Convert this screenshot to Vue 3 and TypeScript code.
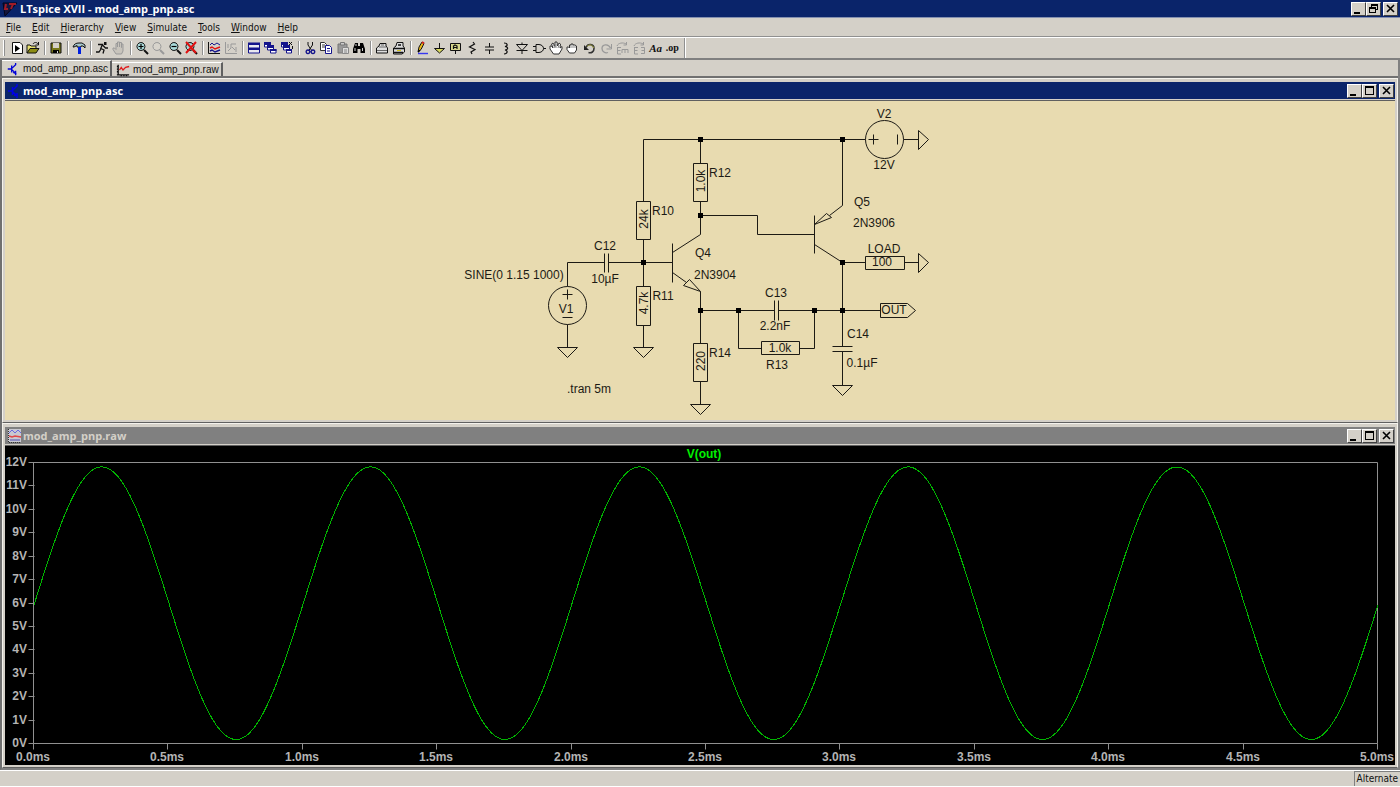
<script setup lang="ts">
interface Shape {
  d: string
  stroke?: string
  fill?: string
  width?: number
}
interface Tool {
  name: string
  shapes?: Shape[]
  text?: string
  small?: boolean
  disabled?: boolean
}
interface Label {
  x: number
  y: number
  text: string
  rotated?: boolean
}

const menus = ['File', 'Edit', 'Hierarchy', 'View', 'Simulate', 'Tools', 'Window', 'Help']

const K = '#111'
const G = '#999'
const N = '#14148c'

const handShape =
  'M5 14L2 9.5V8H3.500L5 9.500V3.500H6.500V7V2H8.500V7V2.500H10.500V7.500V4H12V11L10.500 14Z'

const toolGroups: { id: string; tools: Tool[] }[] = [
  {
    id: 'file',
    tools: [
      { name: 'New schematic', shapes: [{ d: 'M3.500 2.500H11L13.500 5V13.500H3.500Z', stroke: K, fill: '#fff' }, { d: 'M6 5L11 8.500L6 12Z', fill: '#000' }] },
      { name: 'Open', shapes: [{ d: 'M2 13V5H5L6 6H11V8', stroke: K, fill: '#e8e070' }, { d: 'M2 13L5 8.500H14L11 13Z', stroke: K, fill: '#8c8c14' }, { d: 'M8 4C9 2 12 2 13 4M13.500 2V5H10.500', stroke: K }] },
    ],
  },
  {
    id: 'save',
    tools: [
      { name: 'Save', shapes: [{ d: 'M3 3H13V13H3Z', stroke: K, fill: '#77771a' }, { d: 'M5 3H11V8H5Z', fill: '#d4d0c8' }, { d: 'M5 10H11V13H5Z', fill: '#000' }, { d: 'M9 11H10V13H9Z', fill: '#ddd' }] },
    ],
  },
  {
    id: 'panel',
    tools: [
      { name: 'Control panel', shapes: [{ d: 'M2 7C3 4 5 3 8 3H11L14 5V8L12 6H10V7H6V5.500L3 7Z', stroke: K, fill: '#a8c8cc' }, { d: 'M7 7H10V14H7Z', fill: '#0020e0' }] },
    ],
  },
  {
    id: 'run',
    tools: [
      { name: 'Run', shapes: [{ d: 'M10 2H12.500V5H10Z', fill: K }, { d: 'M4 4.500H8.500L6.500 9M8.500 5L11.500 8H14M7 8.500L10 10L9 13.500M7 9L5 12H2', stroke: K, width: 1.3 }] },
      { name: 'Halt', disabled: true, shapes: [{ d: handShape, stroke: G, fill: '#c8c4bc' }] },
    ],
  },
  {
    id: 'zoom',
    tools: [
      { name: 'Zoom in', shapes: [{ d: 'M10 10L14 14', stroke: K, width: 2 }, { d: 'M7 2.500A4 4 0 1 1 6.900 2.500Z', stroke: K, fill: '#a8d8d8' }, { d: 'M4.500 6.500H9.500M7 4V9', stroke: '#000', width: 1.2 }] },
      { name: 'Pan', disabled: true, shapes: [{ d: 'M10 10L14 14', stroke: G, width: 2 }, { d: 'M7 2.500A4 4 0 1 1 6.900 2.500Z', stroke: G, fill: '#d8d4cc' }] },
      { name: 'Zoom out', shapes: [{ d: 'M10 10L14 14', stroke: K, width: 2 }, { d: 'M7 2.500A4 4 0 1 1 6.900 2.500Z', stroke: K, fill: '#a8d8d8' }, { d: 'M4.500 6.500H9.500', stroke: '#000', width: 1.2 }] },
      { name: 'Zoom full extents', shapes: [{ d: 'M10 10L14 14', stroke: K, width: 2 }, { d: 'M7 2.500A4 4 0 1 1 6.900 2.500Z', stroke: K, fill: '#a8d8d8' }, { d: 'M3 2L13 13M13 2L3 13', stroke: '#e01010', width: 2 }] },
    ],
  },
  {
    id: 'plot',
    tools: [
      { name: 'Autorange', shapes: [{ d: 'M2.500 2V13.500H14', stroke: K }, { d: 'M4 5L6 3L8 5L11 3L14 5', stroke: N }, { d: 'M4 8L6 7L9 9L14 7', stroke: '#e01010', width: 1.5 }, { d: 'M4 11L6 10L9 12L14 10', stroke: N, width: 1.4 }] },
      { name: 'Plot settings', disabled: true, shapes: [{ d: 'M2.500 2V13.500H14', stroke: G }, { d: 'M5 11L8 8V4H13M9 7L12 10M13 7V12M5 4V8', stroke: G }] },
    ],
  },
  {
    id: 'windows',
    tools: [
      { name: 'Tile', shapes: [{ d: 'M2.500 3.500H13.500V8H2.500ZM2.500 8.500H13.500V13H2.500Z', stroke: N, fill: '#e8e8f0' }, { d: 'M2 2.500H14V5H2ZM2 8H14V10H2Z', fill: N }] },
      { name: 'Cascade', shapes: [{ d: 'M2.500 3.500H8.500V7H2.500Z', stroke: N, fill: '#fff' }, { d: 'M2 2H9V5H2Z', fill: N }, { d: 'M5.500 6.500H11.500V10H5.500Z', stroke: N, fill: '#fff' }, { d: 'M5 5H12V8H5Z', fill: N }, { d: 'M8.500 9.500H14V13H8.500Z', stroke: N, fill: '#fff' }, { d: 'M8 9H14.500V11H8Z', fill: N }] },
      { name: 'Close all', shapes: [{ d: 'M2.500 3.500H8.500V7H2.500Z', stroke: N, fill: '#fff' }, { d: 'M2 2H9V5H2Z', fill: N }, { d: 'M4.500 6.500H10.500V10H4.500Z', stroke: N, fill: '#fff' }, { d: 'M4 5H11V8H4Z', fill: N }, { d: 'M7.500 9.500H12.500V13H7.500Z', stroke: N, fill: '#fff' }, { d: 'M7 9H13V11H7Z', fill: N }, { d: 'M10 2L13 5M13 2L10 5M13.500 6V9', stroke: K }] },
    ],
  },
  {
    id: 'edit',
    tools: [
      { name: 'Cut', shapes: [{ d: 'M6 2V5L10 11M10.500 2V5L6.500 11', stroke: K }, { d: 'M6 10A1.800 1.800 0 1 1 5.900 10ZM11 10A1.800 1.800 0 1 1 10.900 10Z', stroke: N, width: 1.4 }] },
      { name: 'Copy', shapes: [{ d: 'M2.500 2.500H6.500L8.500 4.500V10.500H2.500Z', stroke: '#333', fill: '#fff' }, { d: 'M4 5H7M4 7H7', stroke: '#333' }, { d: 'M7.500 5.500H11.500L13.500 7.500V13.500H7.500Z', stroke: N, fill: '#fff' }, { d: 'M9 8.500H12M9 11H12', stroke: N }] },
      { name: 'Paste', disabled: true, shapes: [{ d: 'M3 4H12V13H3Z', stroke: '#777', fill: G }, { d: 'M5.500 2.500H9.500V5H5.500Z', stroke: '#777', fill: '#ccc' }, { d: 'M7.500 7.500H13.500V13.500H7.500Z', stroke: '#888', fill: '#ddd' }, { d: 'M9 10H12M9 12H12', stroke: '#888' }] },
      { name: 'Find', shapes: [{ d: 'M4 3H7V6H9V3H12L14 9V13H9.500V9H6.500V13H2V9Z', fill: '#000' }, { d: 'M4 8V11M11.500 8V11M5 4V6', stroke: '#ccc' }] },
    ],
  },
  {
    id: 'print',
    tools: [
      { name: 'Print setup', shapes: [{ d: 'M2.500 8L5 6L6 3.500H12L12 6L13.500 8V13H2.500Z', stroke: K, fill: '#ddd' }, { d: 'M5 7H12M3 10.500H13M7 5H10', stroke: '#666' }] },
      { name: 'Print', shapes: [{ d: 'M2.500 8L5 6L6 2.500H12L12 6L13.500 8V12L11 14H2.500Z', stroke: K, fill: '#ddd' }, { d: 'M3 8.500H13M3 12.500H12M7 5H10', stroke: K, width: 1.4 }, { d: 'M6 10.500H10', stroke: '#d8c820' }] },
    ],
  },
  {
    id: 'draw',
    tools: [
      { name: 'Wire', shapes: [{ d: 'M4 12L5 7L8 2L10 3.500L7 9.500Z', fill: '#e8b818', stroke: K }, { d: 'M4 13L4.500 9.500L6.500 10.500Z', fill: '#000' }, { d: 'M8 2L10 3.500', stroke: '#d02020', width: 2 }, { d: 'M4 13.500H14', stroke: '#3838f0', width: 1.4 }] },
      { name: 'Ground', shapes: [{ d: 'M8.500 3V8', stroke: K }, { d: 'M3.500 8.500H13.500L8.500 13Z', stroke: K, fill: '#d8d860' }] },
      { name: 'Label net', shapes: [{ d: 'M3.500 3.500H13.500V10.500H3.500Z', stroke: K, fill: '#d8d88c' }, { d: 'M8.500 11V14', stroke: K }, { d: 'M6.500 9V6L8 5L10 6V9M7 7.500H10', stroke: K, width: 1.2 }] },
      { name: 'Resistor', shapes: [{ d: 'M9 2L10.500 4L5.500 7L11 9.500L7 12L8 14', stroke: K, width: 1.2 }] },
      { name: 'Capacitor', shapes: [{ d: 'M8.500 3V7M8.500 10V14', stroke: K }, { d: 'M4 7H13M4 10H13', stroke: K, width: 1.2 }] },
      { name: 'Inductor', shapes: [{ d: 'M7 3C11 3 11 6 8 6.500C11.500 7 11.500 9.500 8 10C11 10.500 11 13.500 7 14', stroke: K, width: 1.2 }] },
      { name: 'Diode', shapes: [{ d: 'M2.500 4.500H13.500L8 10.500ZM2.500 10.500H13.500M8 2.500V4.500M8 10.500V14', stroke: K }] },
      { name: 'Component', shapes: [{ d: 'M5 4.500H8C14 5 14 12 8 12.500H5ZM2 6.500H5M2 10.500H5M12.500 8.500H15', stroke: K }] },
      { name: 'Move', shapes: [{ d: 'M5.500 14L2 9V6H3.500L5 8L3.500 4L5 3L7 6.500L7 2H9L9.500 6L11 3L12.500 4L12 8L14 6.500V9L11 14Z', stroke: '#333', fill: '#fff' }, { d: 'M5 4L7 8M8 4V8M11 5L10 8', stroke: '#888' }] },
      { name: 'Drag', shapes: [{ d: 'M5.500 13L3 9.500V7H4.500L5.500 8V5H7V4H9V5H11L12.500 6V10L10.500 13Z', stroke: '#333', fill: '#fff' }, { d: 'M7 5V8M9 5V8M11 6V8', stroke: '#888' }] },
      { name: 'Undo', shapes: [{ d: 'M3 5V10H8Z', fill: '#222' }, { d: 'M5 7.500C7 3 13 4 13 8.500C13 11.500 10.500 13.500 7.500 12.500', stroke: '#333', width: 1.6 }, { d: 'M6 6.500C8 4 12 4.500 12.500 8', stroke: '#a0a040' }] },
      { name: 'Redo', disabled: true, shapes: [{ d: 'M13.500 4V9H8.500', stroke: G }, { d: 'M12.500 8C10 3 4 4.500 4 8.500C4 11.500 7 13.500 10 12.500', stroke: G, width: 1.3 }] },
      { name: 'Rotate', disabled: true, shapes: [{ d: 'M3 6C4 3 9 2 12 4M12.500 2V5H9.500M3.500 7V14H7M3.500 10.500H6.500M3.500 7.500H7M8 13V9.500H14V13M11 10V13', stroke: G }] },
      { name: 'Mirror', disabled: true, shapes: [{ d: 'M3 6C4 3 9 2 12 4M12.500 2V5H9.500M3.500 7V14H7M3.500 10.500H6.500M3.500 7.500H7M10 7.500H13.500V13.500H10M10.500 10.500H13', stroke: G }] },
      { name: 'Text', text: 'Aa' },
      { name: 'SPICE directive', text: '.op', small: true },
    ],
  },
]

const wires: string[] = [
  'M643 201V139H865M903 139H918M643 239V286M643 325V347M567 286V262H604M608 262H672',
  'M567 324V347M700 139V163M700 201V234L672 252M700 215H757V234H814M672 243V282M672 272L686 282',
  'M700 291V343M700 381V404M700 310H774M778 310H880M738 310V348H761M799 348H814V310',
  'M842 139V205L829 215M814 215V253M814 244L842 262V346M842 351V385M842 262H865M904 262H918',
  'M604 253V272M608 253V272M774 300V320M778 300V320M832 346H852M832 351H852',
  'M562 294H572M567 289V299M562 317H572M868 139H878M873 134V144M897 134V144',
]
const outlines: string[] = [
  'M636 201H650V239H636ZM636 286H650V325H636ZM693 163H707V201H693ZM693 343H707V381H693Z',
  'M761 341H799V354H761ZM865 256H904V269H865ZM880 303H907L915 310L907 317H880Z',
  'M557 347H577L567 357ZM633 347H653L643 357ZM690 404H710L700 414ZM832 385H852L842 395Z',
  'M918 130L928 139L918 149ZM918 253L928 262L918 272Z',
  'M700 291L689 279L683 285ZM814 224L826 213L831 217Z',
]
const nodes: [number, number][] = [
  [700, 139], [842, 139], [700, 215], [643, 262], [842, 262], [700, 310], [738, 310], [814, 310], [842, 310],
]
const labels: Label[] = [
  { x: 884, y: 118, text: 'V2' },
  { x: 884, y: 169, text: '12V' },
  { x: 862, y: 206, text: 'Q5' },
  { x: 874, y: 227, text: '2N3906' },
  { x: 884, y: 253, text: 'LOAD' },
  { x: 882, y: 266, text: '100' },
  { x: 720, y: 177, text: 'R12' },
  { x: 663, y: 215, text: 'R10' },
  { x: 663, y: 300, text: 'R11' },
  { x: 720, y: 357, text: 'R14' },
  { x: 703, y: 257, text: 'Q4' },
  { x: 715, y: 279, text: '2N3904' },
  { x: 605, y: 250, text: 'C12' },
  { x: 605, y: 283, text: '10µF' },
  { x: 514, y: 279, text: 'SINE(0 1.15 1000)' },
  { x: 566, y: 313, text: 'V1' },
  { x: 776, y: 297, text: 'C13' },
  { x: 775, y: 330, text: '2.2nF' },
  { x: 780, y: 352, text: '1.0k' },
  { x: 777, y: 369, text: 'R13' },
  { x: 858, y: 338, text: 'C14' },
  { x: 862, y: 367, text: '0.1µF' },
  { x: 894, y: 314, text: 'OUT' },
  { x: 589, y: 393, text: '.tran 5m' },
  { x: 648, y: 219, text: '24k', rotated: true },
  { x: 648, y: 303, text: '4.7k', rotated: true },
  { x: 705, y: 181, text: '1.0k', rotated: true },
  { x: 705, y: 361, text: '220', rotated: true },
]

const plot = { left: 34, right: 1378, top: 462, bottom: 743 }
const xOf = (ms: number): number => plot.left + ((plot.right - plot.left) * ms) / 5
const yOf = (v: number): number => plot.bottom - ((plot.bottom - plot.top) * v) / 12

const voltTicks = Array.from({ length: 13 }, (_, i) => ({ y: Math.round(yOf(i)), text: `${i}V` }))
const timeTicks = Array.from({ length: 11 }, (_, i) => ({
  x: Math.round(xOf(i / 2)),
  text: `${(i / 2).toFixed(1)}ms`,
}))

const trace = Array.from({ length: 673 }, (_, i) => {
  const ms = (i * 5) / 672
  const v = 5.97 + 5.82 * Math.sin(2 * Math.PI * (ms - 0.002))
  return `${xOf(ms).toFixed(1)},${yOf(v).toFixed(1)}`
}).join(' ')
</script>

<template>
  <div class="app">
    <header class="titlebar main-title">
      <svg class="app-icon" viewBox="0 0 16 16" aria-hidden="true">
        <path d="M1 2H15L3 15Z" fill="#16163c" stroke="#05051c" />
        <path d="M4 3L3 8H6M7 3H14M11 3L9 8" fill="none" stroke="#a01c28" stroke-width="2" />
      </svg>
      <h1>LTspice XVII - mod_amp_pnp.asc</h1>
      <div class="controls">
        <button type="button" aria-label="Minimize"><svg viewBox="0 0 13 12"><path d="M2 9H8V11H2Z" /></svg></button>
        <button type="button" aria-label="Restore">
          <svg viewBox="0 0 13 12"><path d="M4 1H11V7H9V6H10V3H5V4H4ZM2 4H9V10H2ZM3 6V9H8V6Z" fill-rule="evenodd" /></svg>
        </button>
        <button type="button" aria-label="Close" class="close"><svg viewBox="0 0 13 12"><path class="cross" d="M3 2L10 9M10 2L3 9" /></svg></button>
      </div>
    </header>

    <nav class="menubar">
      <button v-for="m in menus" :key="m" type="button"><u>{{ m[0] }}</u>{{ m.slice(1) }}</button>
    </nav>

    <div class="toolbar" role="toolbar" aria-label="Schematic tools">
      <div v-for="g in toolGroups" :key="g.id" class="group" :class="g.id">
        <button v-for="t in g.tools" :key="t.name" type="button" :aria-label="t.name" :disabled="t.disabled">
          <svg v-if="t.shapes" viewBox="0 0 16 16">
            <path
              v-for="(s, i) in t.shapes"
              :key="i"
              :d="s.d"
              :stroke="s.stroke ?? 'none'"
              :fill="s.fill ?? 'none'"
              :stroke-width="s.width ?? 1"
            />
          </svg>
          <span v-else :class="{ small: t.small }">{{ t.text }}</span>
        </button>
      </div>
    </div>

    <main class="workspace">
      <div class="tabs" role="tablist">
        <button type="button" role="tab" aria-selected="true" class="tab active">
          <svg viewBox="0 0 16 16"><path d="M2 8H6M6.500 4V12M7 7L11 3V1M7 9L11 13V15" /><path d="M8 12L11 13V10" /></svg>
          mod_amp_pnp.asc
        </button>
        <button type="button" role="tab" aria-selected="false" class="tab">
          <svg viewBox="0 0 16 16">
            <path d="M2.500 2V14M1 13.500H15M1 4H3M1 7H3M1 10H3M6 13V15M9 13V15M12 13V15" class="axis" />
            <path d="M4 8L6 5L8 8L11 5L15 4" class="curve" />
          </svg>
          mod_amp_pnp.raw
        </button>
      </div>

      <section class="window">
        <div class="titlebar child-title">
          <svg class="doc-icon" viewBox="0 0 16 16"><path d="M2 8H6M6.500 4V12M7 7L11 3V1M7 9L11 13V15M8 12L11 13V10" fill="none" stroke="#0000e8" stroke-width="1.500" /></svg>
          <h2>mod_amp_pnp.asc</h2>
          <div class="controls">
            <button type="button" aria-label="Minimize schematic"><svg viewBox="0 0 13 12"><path d="M2 9H8V11H2Z" /></svg></button>
            <button type="button" aria-label="Maximize schematic"><svg viewBox="0 0 13 12"><path d="M2 1H11V10H2ZM3 3V9H10V3Z" fill-rule="evenodd" /></svg></button>
            <button type="button" aria-label="Close schematic" class="close"><svg viewBox="0 0 13 12"><path class="cross" d="M3 2L10 9M10 2L3 9" /></svg></button>
          </div>
        </div>
        <div class="client schematic">
          <svg viewBox="5 101 1390 319" role="img" aria-label="Amplifier schematic">
            <g class="lines" transform="translate(0.5 0.5)">
              <path v-for="d in wires" :key="d" :d="d" />
              <path v-for="d in outlines" :key="d" :d="d" />
              <circle cx="567" cy="305" r="19" />
              <circle cx="884" cy="139" r="19" />
            </g>
            <rect v-for="([x, y], i) in nodes" :key="i" :x="x - 2" :y="y - 2" width="5" height="5" />
            <text
              v-for="(l, i) in labels"
              :key="i"
              :x="l.x"
              :y="l.y"
              :transform="l.rotated ? `rotate(-90 ${l.x} ${l.y})` : undefined"
            >{{ l.text }}</text>
          </svg>
        </div>
      </section>

      <section class="window">
        <div class="titlebar child-title inactive">
          <svg class="doc-icon" viewBox="0 0 16 16">
            <path d="M2 1H15V14H2Z" fill="#c8c8d0" />
            <path d="M2.500 1V14.500H15" fill="none" stroke="#333" stroke-dasharray="1 1" />
            <path d="M3 5L6 2L9 5L12 2L15 5" fill="none" stroke="#6868e0" />
            <path d="M3 8L6 9L9 8L15 9" fill="none" stroke="#e04848" stroke-width="1.500" />
            <path d="M4 12H14" fill="none" stroke="#5050b0" />
          </svg>
          <h2>mod_amp_pnp.raw</h2>
          <div class="controls">
            <button type="button" aria-label="Minimize plot"><svg viewBox="0 0 13 12"><path d="M2 9H8V11H2Z" /></svg></button>
            <button type="button" aria-label="Maximize plot"><svg viewBox="0 0 13 12"><path d="M2 1H11V10H2ZM3 3V9H10V3Z" fill-rule="evenodd" /></svg></button>
            <button type="button" aria-label="Close plot" class="close"><svg viewBox="0 0 13 12"><path class="cross" d="M3 2L10 9M10 2L3 9" /></svg></button>
          </div>
        </div>
        <div class="client plot">
          <svg viewBox="5 446 1390 319" role="img" aria-label="V(out) against time">
            <g class="axes" transform="translate(0.5 0.5)">
              <path :d="`M${plot.left - 1} ${plot.top}H${plot.right - 1}V${plot.bottom}H${plot.left - 1}Z`" />
              <path v-for="t in voltTicks" :key="t.text" :d="`M28 ${t.y}H34`" />
              <path v-for="t in timeTicks" :key="t.text" :d="`M${t.x - 1} 743V749`" />
            </g>
            <polyline :points="trace" />
            <text v-for="t in voltTicks" :key="t.text" class="volt" x="27" :y="t.y + 4">{{ t.text }}</text>
            <text v-for="t in timeTicks" :key="t.text" :x="t.x - 1" y="761">{{ t.text }}</text>
            <text class="trace-name" x="704" y="458">V(out)</text>
          </svg>
        </div>
      </section>
    </main>

    <footer class="statusbar"><span>Alternate</span></footer>
  </div>
</template>

<style>
body {
  margin: 0;
  background: #d4d0c8;
}
</style>

<style scoped>
.app {
  display: flex;
  flex-direction: column;
  box-sizing: border-box;
  min-height: 100vh;
  border-bottom: 1px solid #fff;
  background: #d4d0c8;
  color: #111;
  font-family: "DejaVu Sans Condensed", "DejaVu Sans", sans-serif;
  font-size: 10px;
}
button {
  margin: 0;
  padding: 0;
  border: 0;
  background: none;
  color: inherit;
  font: inherit;
}
svg {
  display: block;
}
.titlebar {
  display: flex;
  align-items: center;
  height: 17px;
  background: #0a246a;
  color: #fff;
}
.titlebar h1,
.titlebar h2 {
  flex: 1;
  margin: 0;
  font-family: "Open Sans", "Noto Sans", sans-serif;
  font-size: 11px;
  line-height: 16px;
  font-weight: bold;
}
.main-title {
  border-bottom: 1px solid #8490b0;
}
.app-icon,
.doc-icon {
  width: 16px;
  height: 16px;
  margin: 0 2px;
}
.doc-icon {
  margin: 0 1px;
}
.inactive {
  background: #808080;
  color: #d4d0c8;
}
.controls {
  display: flex;
  padding-right: 2px;
}
.child-title .controls {
  padding-right: 1px;
}
.controls button {
  box-sizing: border-box;
  width: 15px;
  height: 14px;
  border: 1px solid;
  border-color: #fff #404040 #404040 #fff;
  background: #d4d0c8;
}
.controls svg {
  width: 13px;
  height: 12px;
}
.controls .close {
  margin-left: 2px;
}
.cross {
  fill: none;
  stroke: #000;
  stroke-width: 1.6;
}
.menubar {
  display: flex;
  gap: 11px;
  height: 18px;
  padding-left: 6px;
  border-bottom: 1px solid #909090;
}
.toolbar {
  display: flex;
  height: 20px;
  padding-left: 3px;
  border-top: 1px solid #fff;
  border-bottom: 2px solid #808080;
}
.toolbar::before {
  content: "";
  width: 1px;
  margin: 2px 4px 2px 0;
  border-right: 1px solid #909090;
  background: #fff;
}
.group {
  display: flex;
  justify-content: space-between;
  align-items: center;
}
.group::after {
  content: "";
  width: 1px;
  height: 14px;
  margin: 0 2px 0 3px;
  border-left: 1px solid #909090;
  background: #fff;
}
.group button {
  width: 16px;
  height: 16px;
}
.group svg {
  width: 16px;
  height: 16px;
}
.file {
  width: 39px;
}
.run,
.plot.group,
.print {
  width: 40px;
}
.zoom,
.edit {
  width: 72px;
}
.windows {
  width: 56px;
}
.draw {
  width: 274px;
}
.draw::after {
  height: 20px;
}
.group span {
  font-family: "Liberation Serif", serif;
  font-size: 11px;
  font-style: italic;
  font-weight: bold;
  line-height: 16px;
}
.group .small {
  font-size: 10px;
  font-style: normal;
}
.workspace {
  display: flex;
  flex: 1;
  flex-direction: column;
  border-left: 2px solid #707070;
  border-right: 2px solid #808080;
  border-bottom: 2px solid #808080;
}
.tabs {
  display: flex;
  height: 16px;
  border-bottom: 2px solid #707070;
}
.tab {
  display: flex;
  align-items: center;
  gap: 3px;
  margin-top: 2px;
  padding: 0 2px 0 4px;
  border-top: 1px solid #fff;
  border-right: 2px solid #606060;
  font-family: "Liberation Sans", Arial, sans-serif;
  font-size: 10px;
}
.tab.active {
  margin-top: 0;
}
.tab svg {
  width: 14px;
  height: 14px;
}
.tab path {
  fill: none;
  stroke: #0000d8;
  stroke-width: 1.5;
}
.tab .axis {
  stroke: #111;
}
.tab .curve {
  stroke: #e01818;
}
.window {
  display: flex;
  flex: 1;
  flex-direction: column;
  padding: 3px 2px 2px;
  border: 1px solid #f4f2ec;
  border-bottom-color: #606060;
}
.window:first-of-type {
  margin-top: 0;
}
.client {
  flex: 1;
  margin-top: 1px;
  border-top: 1px solid #606060;
}
.client svg {
  width: 100%;
  height: auto;
}
.client text {
  font-family: "Liberation Sans", Arial, sans-serif;
  font-size: 12px;
  text-anchor: middle;
}
.schematic {
  background: #e8dbb0;
}
.schematic .lines {
  fill: none;
  stroke: #1c1a14;
}
.schematic text {
  fill: #1c1a14;
}
.plot.client {
  background: #000;
}
.axes {
  fill: none;
  stroke: #909090;
}
.plot polyline {
  fill: none;
  stroke: #00b400;
  shape-rendering: crispEdges;
}
.plot text {
  fill: #b4b4b4;
  font-weight: bold;
}
.plot .volt {
  text-anchor: end;
}
.plot .trace-name {
  fill: #00f000;
}
.statusbar {
  display: flex;
  justify-content: flex-end;
  height: 15px;
  border-top: 1px solid #fff;
}
.statusbar span {
  padding: 0 2px 0 1px;
  border-top: 1px solid #808080;
  border-left: 1px solid #808080;
  line-height: 13px;
}
</style>
